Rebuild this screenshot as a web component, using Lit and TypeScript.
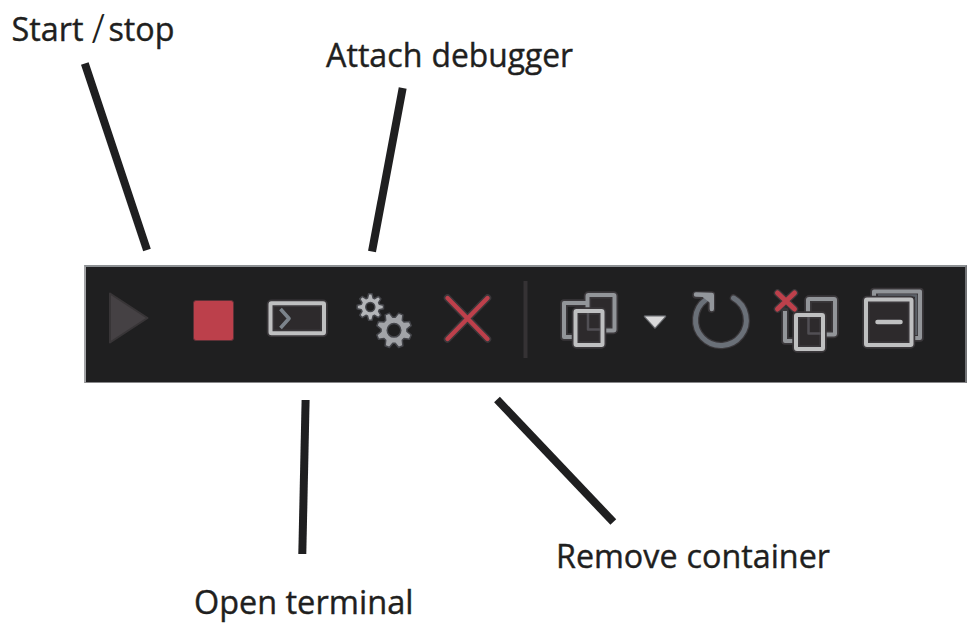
import { LitElement, html, css, svg } from "lit";
import { customElement, property } from "lit/decorators.js";

// A gear outline with eight tapered teeth and a round hole.
function gear(cx: number, cy: number, outer: number, inner: number, hole: number, turn: number) {
  const pts: string[] = [];
  for (let i = 0; i < 8; i++) {
    const a = ((i * 45 + turn) * Math.PI) / 180;
    for (const [r, d] of [[inner, -0.3], [outer, -0.13], [outer, 0.13], [inner, 0.3]]) {
      pts.push(`${(cx + r * Math.cos(a + d)).toFixed(2)} ${(cy + r * Math.sin(a + d)).toFixed(2)}`);
    }
  }
  return `M${pts.join("L")}ZM${cx - hole} ${cy}a${hole} ${hole} 0 1 0 ${2 * hole} 0a${hole} ${hole} 0 1 0 ${-2 * hole} 0Z`;
}

const smallGear = gear(370.3, 307, 13.3, 9.4, 4.5, 0);
const largeGear = gear(394, 330.3, 17.8, 13, 6.8, 22.5);

// Stacked frames used by the copy and prune commands.
const frames = (dx: number, dy: number, left: string) => svg`
  <g transform="translate(${dx} ${dy})">
    <rect class="halo pane" x="587.5" y="295" width="27" height="35.5" rx="1"/>
    <path class="halo" d="${left}"/>
    <rect class="mid" x="587.5" y="295" width="27" height="35.5" rx="1"/>
    <path class="mid" d="${left}"/>
    <rect class="halo pane" x="575.5" y="311" width="27" height="34" rx="1"/>
    <path class="slate thin" d="M588 313V329.5H600"/>
    <rect class="light" x="575.5" y="311" width="27" height="34" rx="1"/>
  </g>`;

const icons: Record<string, { x: number; w: number; art: unknown }> = {
  start: { x: 86, w: 84, art: svg`<path class="play" d="M110 293.5L147.5 318L110 342.5Z"/>` },
  stop: { x: 170, w: 82, art: svg`<rect class="stop" x="193.5" y="300.5" width="40" height="40" rx="2.5"/>` },
  terminal: {
    x: 252, w: 90, art: svg`
      <rect class="halo pane" x="270.5" y="303.3" width="53.5" height="30" rx="1"/>
      <rect class="light" x="270.5" y="303.3" width="53.5" height="30" rx="1"/>
      <path class="slate chevron" d="M280.5 309L289 318.5L280.5 328"/>`,
  },
  debug: {
    x: 342, w: 86, art: svg`
      <path class="gear" d="${smallGear}"/>
      <path class="gear large" d="${largeGear}"/>`,
  },
  remove: {
    x: 428, w: 78, art: svg`
      <path class="halo" d="M447.5 298L487.5 339M487.5 298L447.5 339"/>
      <path class="red" d="M447.5 298L487.5 339M487.5 298L447.5 339"/>`,
  },
  separator: { x: 506, w: 40, art: svg`<path class="rule" d="M525.5 281V358"/>` },
  copy: { x: 546, w: 84, art: frames(0, 0, "M587 303H564V337H575") },
  caret: { x: 630, w: 50, art: svg`<path class="caret" d="M645 316.5H665L655 327.5Z"/>` },
  refresh: {
    x: 680, w: 80, art: svg`
      <path class="halo" d="M706 299.5A25.4 25.4 0 1 0 733.5 298M696 295L711.5 295V309"/>
      <path class="slate ring" d="M706 299.5A25.4 25.4 0 1 0 733.5 298"/>
      <path class="corner" d="M700 295H711.5V304Z"/>
      <path class="arrow" d="M696 294.5L711.8 295V309"/>`,
  },
  prune: {
    x: 760, w: 92, art: svg`
      ${frames(220.5, 4, "M564.5 307V337H575")}
      <path class="halo" d="M777.5 293L794.5 309M794.5 293L777.5 309"/>
      <path class="red bold" d="M777.5 293L794.5 309M794.5 293L777.5 309"/>`,
  },
  collapse: {
    x: 852, w: 113, art: svg`
      <path class="halo" d="M874 299V291.5H920V338H912Z"/>
      <path class="mid" d="M874 299V291.5H920V338H912"/>
      <path class="slate fine" d="M878 295.5H916V335"/>
      <rect class="halo pane" x="866" y="299.5" width="45.5" height="45.5" rx="1"/>
      <rect class="light" x="866" y="299.5" width="45.5" height="45.5" rx="1"/>
      <path class="light dash" d="M877.5 322H900.5"/>`,
  },
};

@customElement("tool-icon")
class ToolIcon extends LitElement {
  @property() name = "";

  static styles = css`
    :host { display: block; flex: none; height: 114px; }
    svg { display: block; }
    path, rect { fill: none; stroke-linejoin: round; }
    .halo { stroke: #3a373a; stroke-width: 7.5; stroke-linecap: round; }
    .pane { fill: #2d2a2c; }
    .light { stroke: #bfc0c1; stroke-width: 4; }
    .mid { stroke: #929599; stroke-width: 4; }
    .slate { stroke: #6a7078; stroke-width: 4; }
    .thin { stroke: #514f54; stroke-width: 2.5; }
    .fine { stroke: #5d6269; stroke-width: 2.5; }
    .chevron { stroke: #7b838b; stroke-width: 3.6; }
    .ring { stroke-width: 5; stroke-linecap: round; }
    .dash { stroke-width: 4.5; stroke-linecap: round; }
    .red { stroke: #bd404b; stroke-width: 4.4; stroke-linecap: round; }
    .bold { stroke-width: 5; }
    .play { fill: #454144; stroke: #383537; stroke-width: 2; }
    .stop { fill: #bc404b; stroke: #5d3036; stroke-width: 1; }
    .gear { fill: #b3b5b8; fill-rule: evenodd; stroke: #45464b; stroke-width: 1.5; }
    .large { fill: #a2a4a8; }
    .rule { stroke: #353234; stroke-width: 4; }
    .caret { fill: #d9d9da; stroke: #626468; stroke-width: 2.5; paint-order: stroke; }
    .arrow { stroke: #92969b; stroke-width: 4.4; stroke-linecap: round; }
    .corner { fill: #92969b; }
  `;

  render() {
    const icon = icons[this.name];
    return html`<svg width=${icon.w} height="114" viewBox="${icon.x} 267 ${icon.w} 114">${icon.art}</svg>`;
  }
}

interface Word { text: string; x: number; width: number }
interface Callout { y: number; words: Word[]; line: number[] }

const callouts: Callout[] = [
  {
    y: 41, line: [84.8, 63.5, 147, 250],
    words: [{ text: "Start", x: 11.5, width: 72 }, { text: "/", x: 91, width: 14.5 }, { text: "stop", x: 108.5, width: 66 }],
  },
  {
    y: 67, line: [402.7, 88, 372, 251.5],
    words: [{ text: "Attach", x: 326, width: 96.5 }, { text: "debugger", x: 431.5, width: 141.5 }],
  },
  {
    y: 613.5, line: [305.6, 400, 302.3, 554],
    words: [{ text: "Open", x: 194, width: 83 }, { text: "terminal", x: 285.5, width: 128 }],
  },
  {
    y: 568.3, line: [497, 399.5, 613.3, 522],
    words: [{ text: "Remove", x: 556, width: 121.5 }, { text: "container", x: 686.5, width: 143.5 }],
  },
];

@customElement("app-root")
class AppRoot extends LitElement {
  static styles = css`
    :host {
      display: flex;
      align-items: flex-start;
      position: relative;
      box-sizing: border-box;
      width: 980px;
      height: 633px;
      padding: 265px 13px 0 84px;
      background: #fff;
      overflow: hidden;
    }
    .toolbar {
      display: flex;
      flex: 1;
      box-sizing: border-box;
      height: 118px;
      border-style: solid;
      border-width: 2px 2px 1.5px;
      border-color: #8d9194 #717376 #88888a #a2a3a5;
      background: #1f1f20;
      overflow: hidden;
    }
    .callouts { position: absolute; inset: 0; }
    .line { stroke: #1f1f20; stroke-width: 8; }
    .label {
      font: 400 32.5px "Open Sans", "Noto Sans", sans-serif;
      fill: #1f1f20;
      stroke: #1f1f20;
      stroke-width: 0.4px;
    }
    .slash { font: 400 36px Lato, sans-serif; stroke: none; }
  `;

  render() {
    return html`
      <div class="toolbar">
        ${Object.keys(icons).map((name) => html`<tool-icon name=${name}></tool-icon>`)}
      </div>
      <svg class="callouts" width="980" height="633">
        ${callouts.map(({ y, words, line }) => svg`
          <line class="line" x1=${line[0]} y1=${line[1]} x2=${line[2]} y2=${line[3]}/>
          ${words.map((w) => svg`<text class=${w.text === "/" ? "label slash" : "label"} x=${w.x} y=${y} textLength=${w.width} lengthAdjust="spacingAndGlyphs">${w.text}</text>`)}
        `)}
      </svg>
    `;
  }
}
